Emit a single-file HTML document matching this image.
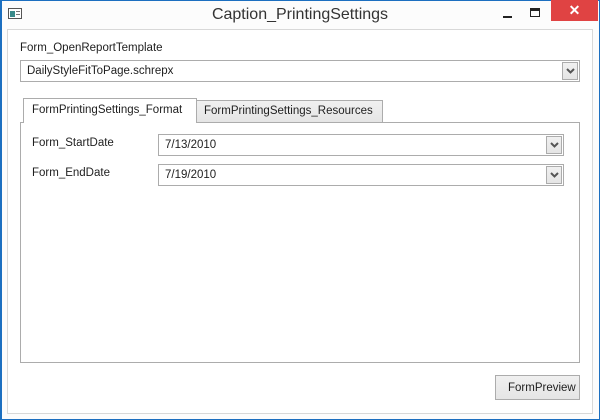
<!DOCTYPE html>
<html><head><style>
*{margin:0;padding:0;box-sizing:border-box}
body{width:600px;height:420px;position:relative;background:#fff;font-family:"Segoe UI","Liberation Sans",sans-serif;font-size:11.5px;color:#1e1e1e;overflow:hidden}
.a{position:absolute}
.frame{left:0;top:0;width:600px;height:420px;border:1px solid #1c6fc0;border-left-width:2px;background:#fcfcfc}
.client{left:7px;top:29px;width:586px;height:385px;border:1px solid #d8d8d8;background:#fff}
.combo{border:1px solid #acacac;background:#fff;height:22px;padding:4px 0 0 6px}
.btn{border:1px solid #acacac;background:linear-gradient(#f0f0f0,#e5e5e5);width:16px;height:18px;top:1px;right:1px;position:absolute}
.btn svg{position:absolute;left:3px;top:5px}
</style></head><body>
<div class="a frame"></div>
<div class="a" style="left:8px;top:8px;width:14px;height:11px;border:1px solid #555;background:#fff"><div style="position:absolute;left:1px;top:2px;width:5px;height:6px;background:#3a8a8a"></div><div style="position:absolute;left:7px;top:2px;width:4px;height:1px;background:#777"></div><div style="position:absolute;left:7px;top:5px;width:4px;height:1px;background:#777"></div></div>
<div class="a" style="left:0;width:600px;top:6px;text-align:center;font-size:16px;color:#333">Caption_PrintingSettings</div>
<div class="a" style="left:503px;top:16px;width:9px;height:2px;background:#222"></div>
<div class="a" style="left:530px;top:8px;width:10px;height:9px;border:1px solid #222;border-top-width:3px"></div>
<div class="a" style="left:551px;top:0;width:47px;height:21px;background:#e04343;color:#fff;text-align:center;font-size:14px;font-weight:bold;line-height:20px">✕</div>
<div class="a client"></div>
<div class="a" style="left:20px;top:42px">Form_OpenReportTemplate</div>
<div class="a combo" style="left:20px;top:60px;width:560px">DailyStyleFitToPage.schrepx<div class="btn"><svg width="9" height="6"><path d="M1 1L4.5 4.5L8 1" stroke="#555" stroke-width="2" fill="none"/></svg></div></div>
<div class="a" style="left:20px;top:122px;width:560px;height:241px;border:1px solid #acacac"></div>
<div class="a" style="left:196px;top:100px;width:187px;height:23px;border:1px solid #acacac;background:linear-gradient(#f0f0f0,#e5e5e5);padding:4px 0 0 7px;white-space:nowrap;overflow:hidden">FormPrintingSettings_Resources</div>
<div class="a" style="left:23px;top:98px;width:174px;height:25px;border:1px solid #acacac;border-bottom:none;background:#fff;padding:5px 0 0 8px;white-space:nowrap">FormPrintingSettings_Format</div>
<div class="a" style="left:32px;top:137px">Form_StartDate</div>
<div class="a" style="left:32px;top:167px">Form_EndDate</div>
<div class="a combo" style="left:158px;top:134px;width:406px">7/13/2010<div class="btn"><svg width="9" height="6"><path d="M1 1L4.5 4.5L8 1" stroke="#555" stroke-width="2" fill="none"/></svg></div></div>
<div class="a combo" style="left:158px;top:164px;width:406px">7/19/2010<div class="btn"><svg width="9" height="6"><path d="M1 1L4.5 4.5L8 1" stroke="#555" stroke-width="2" fill="none"/></svg></div></div>
<div class="a" style="left:495px;top:375px;width:85px;height:25px;border:1px solid #acacac;background:linear-gradient(#f0f0f0,#e5e5e5);padding:6px 0 0 12px;overflow:hidden;white-space:nowrap">FormPreview</div>
</body></html>
